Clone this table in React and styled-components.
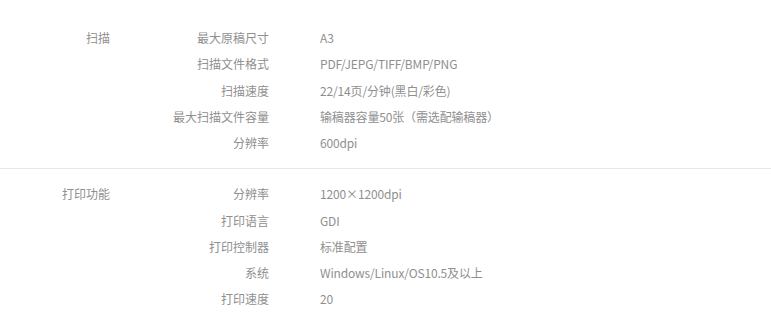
import React from "react";
import styled, { createGlobalStyle } from "styled-components";

const Global = createGlobalStyle`
  html, body { margin: 0; padding: 0; background: #fff; }
  body { font-family: "Microsoft YaHei", "Noto Sans CJK SC", sans-serif; font-size: 12px; color: #8f8f8f; }
`;

const Page = styled.div`
  padding-top: 13px;
`;

const Section = styled.section`
  display: flex;
  padding: 12px 0;
  border-bottom: 1px solid ${(p) => (p.$last ? "transparent" : "#e8e8e8")};
`;

const Category = styled.div`
  width: 110px;
  flex: none;
  text-align: right;
  line-height: 26.25px;
  color: #8f8f8f;
`;

const Specs = styled.dl`
  margin: 0;
  display: grid;
  grid-template-columns: 159px 1fr;
  column-gap: 51px;
  line-height: 26.25px;
`;

const Label = styled.dt`
  text-align: right;
  color: #8f8f8f;
`;

const Value = styled.dd`
  margin: 0;
  color: #8f8f8f;
  letter-spacing: -0.15px;
`;

const data = [
  {
    cat: "扫描",
    rows: [
      ["最大原稿尺寸", "A3"],
      ["扫描文件格式", "PDF/JEPG/TIFF/BMP/PNG"],
      ["扫描速度", "22/14页/分钟(黑白/彩色)"],
      ["最大扫描文件容量", "输稿器容量50张（需选配输稿器）"],
      ["分辨率", "600dpi"],
    ],
  },
  {
    cat: "打印功能",
    rows: [
      ["分辨率", "1200×1200dpi"],
      ["打印语言", "GDI"],
      ["打印控制器", "标准配置"],
      ["系统", "Windows/Linux/OS10.5及以上"],
      ["打印速度", "20"],
    ],
  },
];

export default function App() {
  return (
    <>
      <Global />
      <Page>
        {data.map((s, i) => (
          <Section key={s.cat} $last={i === data.length - 1}>
            <Category>{s.cat}</Category>
            <Specs>
              {s.rows.map(([k, v]) => (
                <React.Fragment key={k}>
                  <Label>{k}</Label>
                  <Value>{v}</Value>
                </React.Fragment>
              ))}
            </Specs>
          </Section>
        ))}
      </Page>
    </>
  );
}
